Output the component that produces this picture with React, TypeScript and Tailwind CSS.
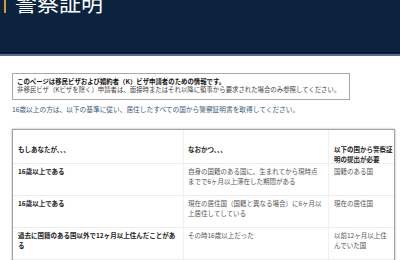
const rows = [
  {
    cond: ['16歳以上である'],
    also: ['自身の国籍のある国に、生まれてから現時点', 'までで6ヶ月以上滞在した期間がある'],
    need: ['国籍のある国'],
  },
  {
    cond: ['16歳以上である'],
    also: ['現在の居住国（国籍と異なる場合）に6ヶ月以', '上居住してしている'],
    need: ['現在の居住国'],
  },
  {
    cond: ['過去に国籍のある国以外で12ヶ月以上住んだことがあ', 'る'],
    also: ['その時16歳以上だった'],
    need: ['以前12ヶ月以上住', 'んでいた国'],
  },
]

function Lines({ lines }: { lines: string[] }) {
  return (
    <>
      {lines.map((l, i) => (
        <span key={i} className="block whitespace-nowrap">
          {l}
        </span>
      ))}
    </>
  )
}

export default function App() {
  return (
    <div
      className="w-[400px] h-[260px] overflow-hidden bg-white"
      style={{ fontFamily: '"Noto Sans CJK JP", "Noto Sans", sans-serif' }}
    >
      <header className="h-[67px] bg-[#0c2340] border-b-2 border-[#5b6c82]">
        <div className="h-[64px] border-b border-[#03142c]">
          <div className="ml-[4px] -mt-[11px] h-[24px] flex items-center border-l-2 border-[#d39b33] pl-[9px]">
            <h1 className="text-[22px] leading-[24px] text-white font-normal">警察証明</h1>
          </div>
        </div>
      </header>

      <div className="px-[12px]">
        <div className="mt-[17px] w-[338px] border border-[#a8a8a8] pl-[4px] pt-[4px] pb-[6px] text-[6.4px] leading-[7.5px]">
          <p className="font-bold text-[#111]">
            このページは移民ビザおよび婚約者（K）ビザ申請者のための情報です。
          </p>
          <p className="text-[#444]">
            非移民ビザ（Kビザを除く）申請者は、面接時またはそれ以降に領事から要求された場合のみ参照してください。
          </p>
        </div>

        <p className="mt-[4px] text-[6.7px] leading-[10px] text-[#3a5877]">
          16歳以上の方は、以下の基準に従い、居住したすべての国から警察証明書を取得してください。
        </p>

        <div className="mt-[15px] w-[383px] border border-[#a3a3a3] shadow-[0_0_2px_rgba(0,0,0,0.35)] text-[6.5px] leading-[10px]">
          <div className="grid grid-cols-[171px_145px_1fr] h-[34px] border-b border-[#ececec] font-bold text-[#222]">
            <div className="pl-[5px] pt-[14px] border-r border-[#f0f0f0]">もしあなたが、、、</div>
            <div className="pl-[4px] pt-[14px] border-r border-[#f0f0f0]">なおかつ、、、</div>
            <div className="pl-[5px] pt-[14px]">
              <Lines lines={['以下の国から警察証', '明の提出が必要']} />
            </div>
          </div>
          {rows.map((r, i) => (
            <div
              key={i}
              className="grid grid-cols-[171px_145px_1fr] h-[32px] border-b border-[#ececec]"
            >
              <div className="pl-[5px] pt-[2px] border-r border-[#f0f0f0] font-bold text-[#222]">
                <Lines lines={r.cond} />
              </div>
              <div className="pl-[4px] pt-[2px] border-r border-[#f0f0f0] text-[#555]">
                <Lines lines={r.also} />
              </div>
              <div className="pl-[5px] pt-[2px] text-[#555]">
                <Lines lines={r.need} />
              </div>
            </div>
          ))}
        </div>
      </div>
    </div>
  )
}
